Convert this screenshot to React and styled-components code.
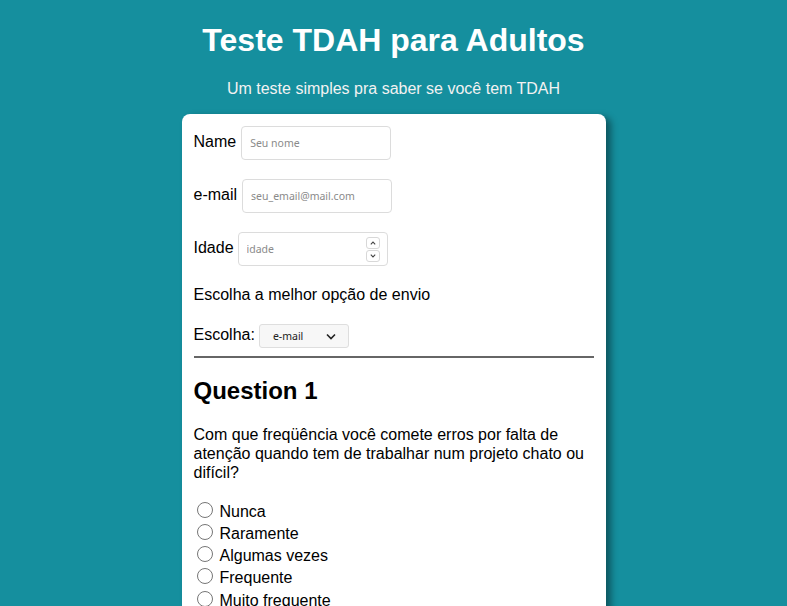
import React from 'react';
import styled, {createGlobalStyle} from 'styled-components';

const GlobalStyle = createGlobalStyle`
  body {
    margin: 0;
    background: #158f9e;
    font-family: "Liberation Sans", Arial, sans-serif;
    color: #000;
  }
`;

const Header = styled.header`
  text-align: center;
  color: #fff;
`;

const Title = styled.h1`
  font-size: 32px;
  margin: 22px 0 21.44px;
`;

const Subtitle = styled.p`
  font-size: 16px;
  margin: 0 0 16px;
  color: #f2f2f2;
`;

const Card = styled.form`
  width: 400px;
  margin: 0 auto;
  padding: 12px;
  background: #fff;
  border-radius: 8px;
  box-shadow: 5px 3px 7px rgba(0, 0, 0, 0.4);
  min-height: 600px;
`;

const Row = styled.div`
  display: flex;
  align-items: baseline;
  margin-bottom: ${p => p.$gap || 19}px;
`;

const Label = styled.label`
  font-size: 16px;
  margin-right: ${p => p.$space || 5}px;
`;

const fieldFont = `"Noto Sans", "Open Sans", sans-serif`;

const TextInput = styled.input`
  box-sizing: border-box;
  width: 150px;
  height: 34px;
  padding: 0 8px;
  border: 1px solid #dcdcdc;
  border-radius: 4px;
  font-family: ${fieldFont};
  font-size: 10.5px;
  outline: none;
  &::placeholder { color: #8a8a8a; }
`;

const NumberBox = styled.div`
  box-sizing: border-box;
  width: 150px;
  height: 34px;
  padding: 0 7px 0 8px;
  border: 1px solid #dcdcdc;
  border-radius: 4px;
  display: flex;
  align-items: center;
`;

const NumberField = styled.input`
  flex: 1;
  min-width: 0;
  border: none;
  padding: 0;
  outline: none;
  font-family: ${fieldFont};
  font-size: 10.5px;
  &::placeholder { color: #8a8a8a; }
`;

const Spinner = styled.div`
  display: flex;
  flex-direction: column;
  gap: 1px;
`;

const SpinBtn = styled.span`
  box-sizing: border-box;
  width: 14px;
  height: 12px;
  border: 1px solid #d8d8d8;
  border-radius: 3px;
  display: flex;
  align-items: center;
  justify-content: center;
`;

const Text = styled.p`
  font-size: 16px;
  margin: 0 0 20px;
`;

const Select = styled.div`
  box-sizing: border-box;
  width: 90px;
  height: 24px;
  padding: 0 12px 0 13px;
  border: 1px solid #dedede;
  border-radius: 3px;
  background: #f7f7f7;
  display: flex;
  align-items: center;
  justify-content: space-between;
  font-family: ${fieldFont};
  font-size: 10.5px;
  color: #222;
`;

const Rule = styled.hr`
  border: none;
  border-top: 2px solid #666;
  margin: 0;
`;

const Question = styled.h2`
  font-size: 24px;
  margin: 19px 0 20px;
`;

const Prompt = styled.p`
  font-size: 16px;
  line-height: 19px;
  margin: 0 0 16px;
`;

const Option = styled.label`
  display: flex;
  align-items: flex-end;
  height: 22.25px;
  font-size: 16px;
`;

const Radio = styled.input`
  appearance: none;
  box-sizing: border-box;
  width: 16px;
  height: 16px;
  margin: 0 7px 3px 3px;
  border: 1px solid #767676;
  border-radius: 50%;
  background: #fff;
`;

const Chevron = ({up}) => (
  <svg width="8" height="6" viewBox="0 0 8 6">
    <path d={up ? 'M1.8 4.3 L4 2.1 L6.2 4.3' : 'M1.8 1.7 L4 3.9 L6.2 1.7'} fill="none" stroke="#444" strokeWidth="1.1"/>
  </svg>
);

const options = ['Nunca', 'Raramente', 'Algumas vezes', 'Frequente', 'Muito frequente'];

export default function App() {
  return (
    <>
      <GlobalStyle/>
      <Header>
        <Title>Teste TDAH para Adultos</Title>
        <Subtitle>Um teste simples pra saber se você tem TDAH</Subtitle>
      </Header>
      <Card>
        <Row>
          <Label>Name</Label>
          <TextInput placeholder="Seu nome"/>
        </Row>
        <Row>
          <Label>e-mail</Label>
          <TextInput placeholder="seu_email@mail.com"/>
        </Row>
        <Row $gap={20}>
          <Label $space={4}>Idade</Label>
          <NumberBox>
            <NumberField placeholder="idade"/>
            <Spinner>
              <SpinBtn><Chevron up/></SpinBtn>
              <SpinBtn><Chevron/></SpinBtn>
            </Spinner>
          </NumberBox>
        </Row>
        <Text>Escolha a melhor opção de envio</Text>
        <Row $gap={8}>
          <Label $space={4}>Escolha:</Label>
          <Select>
            e-mail
            <svg width="10" height="7" viewBox="0 0 10 7">
              <path d="M1 1.5 L5 5.5 L9 1.5" fill="none" stroke="#222" strokeWidth="1.6"/>
            </svg>
          </Select>
        </Row>
        <Rule/>
        <Question>Question 1</Question>
        <Prompt>Com que freqüência você comete erros por falta de atenção quando tem de trabalhar num projeto chato ou difícil?</Prompt>
        {options.map((o, i) => (
          <Option key={i}>
            <Radio type="radio" name="q1"/>
            {o}
          </Option>
        ))}
      </Card>
    </>
  );
}
